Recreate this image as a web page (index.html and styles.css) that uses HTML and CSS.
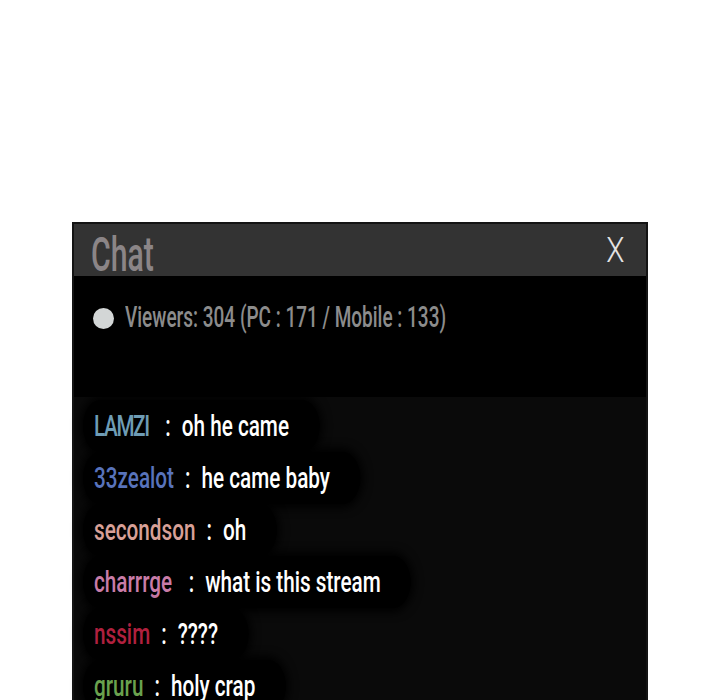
FILE: index.html
```html
<!DOCTYPE html>
<html lang="en">
<head>
    <meta charset="UTF-8">
    <meta name="viewport" content="width=device-width, initial-scale=1.0">
    <title>Chat</title>
    <link rel="stylesheet" href="styles.css">
</head>
<body>
    <div class="chat">
        <header class="chat-head">
            <span class="title">Chat</span>
            <span class="close">X</span>
        </header>

        <div class="viewers">
            <span class="dot"></span>
            <span class="count">Viewers: 304 (PC : 171 / Mobile : 133)</span>
        </div>

        <div class="messages">
            <p class="msg"><span class="bubble"><span class="name lamzi">LAMZI</span><span class="sep wide">:</span><span class="text">oh he came</span></span></p>
            <p class="msg"><span class="bubble"><span class="name zealot">33zealot</span><span class="sep">:</span><span class="text">he came baby</span></span></p>
            <p class="msg"><span class="bubble"><span class="name secondson">secondson</span><span class="sep">:</span><span class="text">oh</span></span></p>
            <p class="msg"><span class="bubble"><span class="name charrrge">charrrge</span><span class="sep wide">:</span><span class="text">what is this stream</span></span></p>
            <p class="msg"><span class="bubble"><span class="name nssim">nssim</span><span class="sep">:</span><span class="text">????</span></span></p>
            <p class="msg"><span class="bubble"><span class="name gruru">gruru</span><span class="sep">:</span><span class="text">holy crap</span></span></p>
        </div>
    </div>
</body>
</html>
```

FILE: styles.css
```css
html, body {
    margin: 0;
    padding: 0;
    height: 700px;
    overflow: hidden;
    background: #ffffff;
}

body {
    font-family: 'Roboto', 'Liberation Sans', sans-serif;
}

.chat {
    width: 572px;
    margin: 222px 0 0 72px;
    border: 2px solid #141414;
    border-bottom: none;
    background: #0a0a0a;
    height: 600px;
}

.chat-head {
    display: flex;
    justify-content: space-between;
    height: 52px;
    padding: 9px 22px 0 17px;
    box-sizing: border-box;
    background: #333333;
    line-height: 43px;
}

.title {
    font-size: 48px;
    font-weight: 500;
    color: #8b8587;
    display: inline-block;
    transform: scaleX(0.63);
    transform-origin: left;
}

.close {
    font-size: 35px;
    font-weight: 300;
    color: #e4e4e4;
    margin-top: -4px;
    display: inline-block;
    transform: scaleX(0.85);
    transform-origin: right;
}

.viewers {
    display: flex;
    align-items: center;
    background: #000000;
    height: 121px;
    padding: 21px 0 60px 19px;
    box-sizing: border-box;
    line-height: 40px;
}

.dot {
    width: 21px;
    height: 21px;
    border-radius: 50%;
    background: #d3d6d6;
    margin: 2px 11px 0 0;
    flex-shrink: 0;
}

.count {
    font-size: 29px;
    font-weight: 500;
    color: #8c8c8c;
    white-space: nowrap;
    display: inline-block;
    transform: scaleX(0.655);
    transform-origin: left;
}

.messages {
    padding: 3px 0 0 21px;
}

.msg {
    margin: 0;
    height: 52px;
    line-height: 52px;
    white-space: nowrap;
}

.bubble {
    display: inline-block;
    font-size: 30px;
    font-weight: 500;
    color: #ffffff;
    background: #000000;
    border-radius: 30px;
    padding: 0 44px 0 16px;
    margin-left: -12px;
    box-shadow: 0 0 12px 4px #000000;
    transform: scaleX(0.69);
    transform-origin: left;
}

.sep {
    margin: 0 16px;
    color: #ffffff;
}

.sep.wide {
    margin-left: 24px;
}

.lamzi {
    color: #6e9cb5;
    letter-spacing: -2px;
}
.zealot { color: #5873bb; }
.secondson { color: #d8a097; }
.charrrge { color: #c97ca8; }
.nssim { color: #b0203e; }
.gruru { color: #6aa24e; }
```
